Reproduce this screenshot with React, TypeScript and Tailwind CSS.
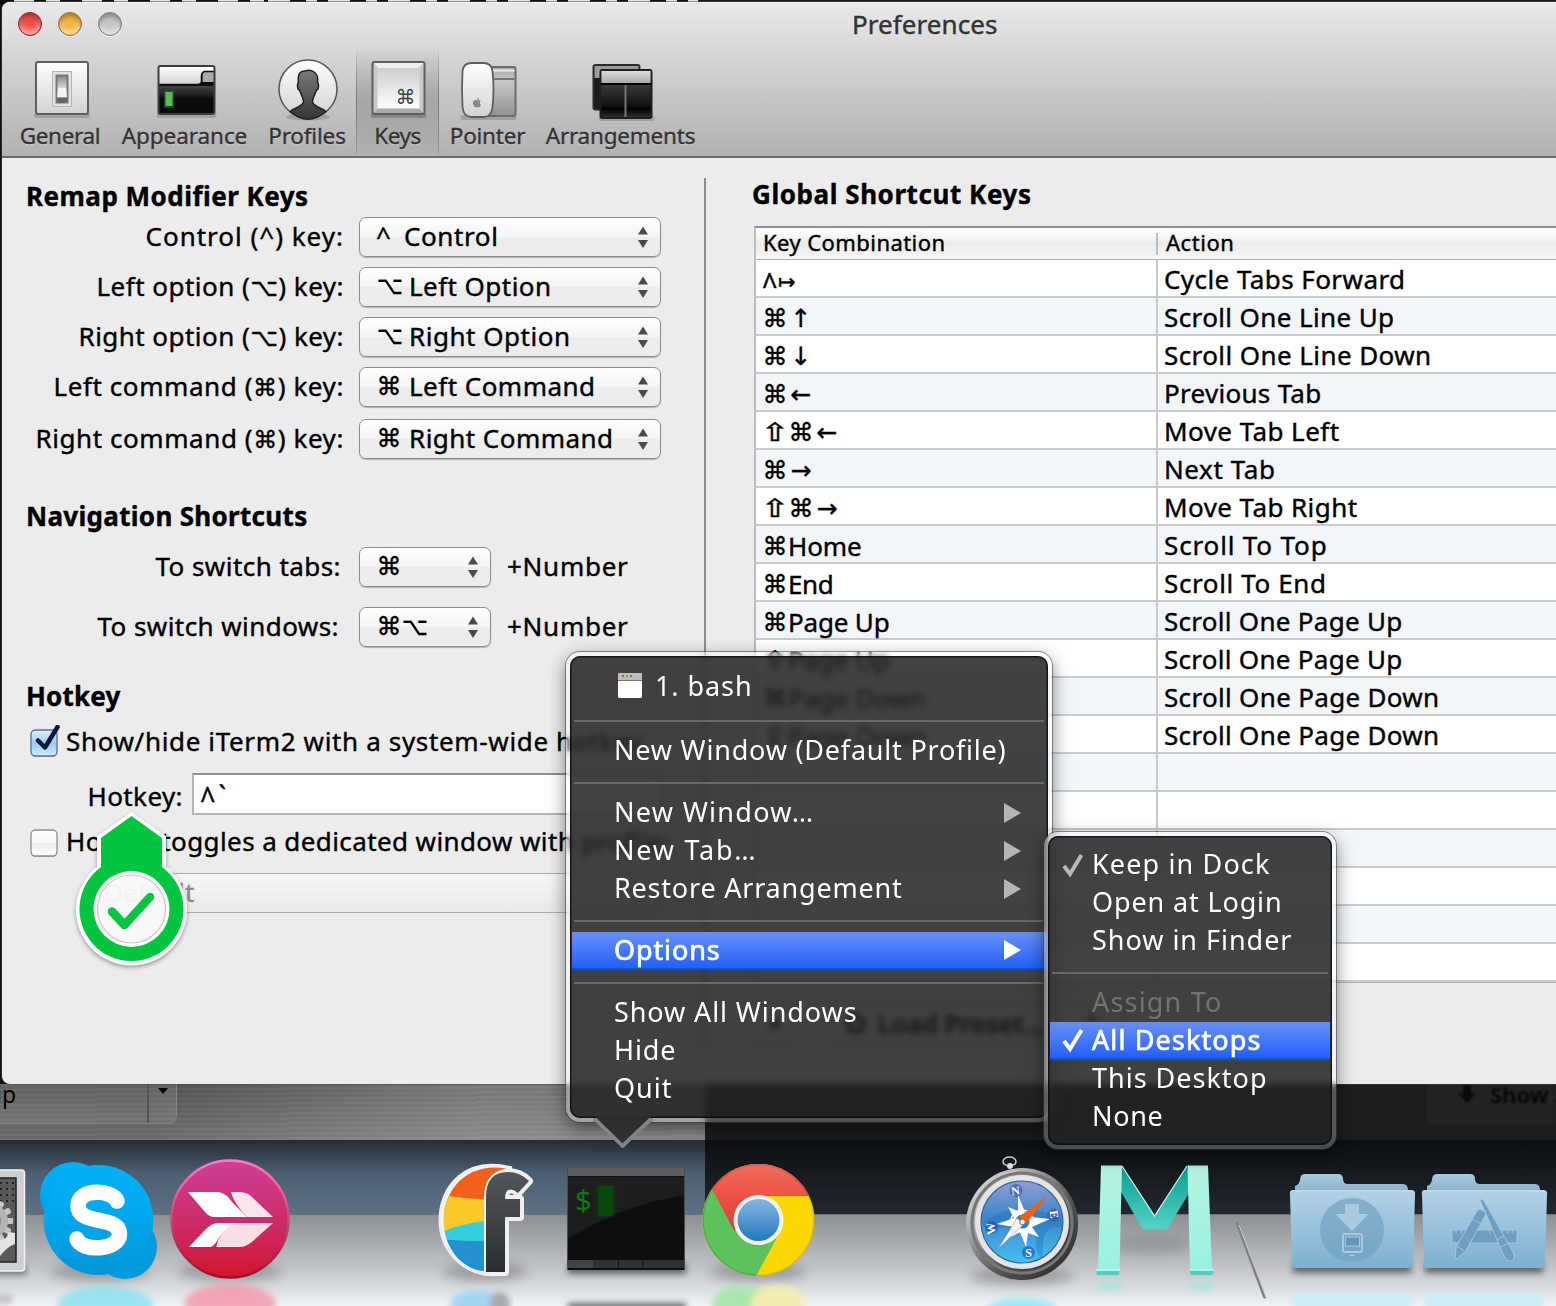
import { useLayoutEffect, useRef, type ReactNode } from "react";
import { FaApple } from "react-icons/fa";

/* Text run tracked so that it fills a given width. */
function Fit({ w, className = "", children }: { w: number; className?: string; children: ReactNode }) {
  const ref = useRef<HTMLSpanElement>(null);
  useLayoutEffect(() => {
    const el = ref.current;
    if (!el) return;
    el.style.letterSpacing = "0px";
    const natural = el.getBoundingClientRect().width;
    const n = Array.from(el.textContent || "").length;
    el.style.letterSpacing = `${(w - 1.5 - natural) / Math.max(n, 1)}px`;
  }, [w]);
  return (
    <span ref={ref} className={`inline-block whitespace-pre ${className}`}>
      {children}
    </span>
  );
}

const Sym = ({ children }: { children: string }) => (
  <span className="font-['DejaVu_Sans'] text-[24px] leading-none">{children}</span>
);

const Key = ({ children, className = "" }: { children: string; className?: string }) => (
  <span className={`inline-flex w-[26px] shrink-0 justify-center font-['DejaVu_Sans'] text-[25px] leading-none tracking-normal ${className} ${children === "⇧" ? "scale-x-140" : ""}`}>{children}</span>
);

/* ---------- toolbar ---------- */

function ToolIcon({ cx, children }: { cx: number; children: ReactNode }) {
  return (
    <svg width="72" height="68" viewBox={`${cx - 36} 55 72 68`} className="block shrink-0">
      {children}
    </svg>
  );
}

function Tool({ w, label, lw, active, children }: { w: string; label: string; lw: number; active?: boolean; children: ReactNode }) {
  return (
    <div className={`relative flex h-[107px] shrink-0 flex-col items-center pt-[8px] ${w}`}>
      {active && (
        <div className="absolute inset-0 flex justify-between bg-linear-to-b from-transparent via-[#9f9f9f]/80 to-[#b0b0b0]">
          <span className="w-px bg-linear-to-b from-transparent via-[#777] to-[#999]" />
          <span className="w-px bg-linear-to-b from-transparent via-[#777] to-[#999]" />
        </div>
      )}
      <div className="relative">{children}</div>
      <Fit w={lw} className="relative mt-[-2px] text-[22.5px] leading-[30px] text-[#333] [text-shadow:0_1px_1px_rgba(255,255,255,.5)]">{label}</Fit>
    </div>
  );
}

function Toolbar() {
  return (
    <div className="flex pl-[7px]">
      <Tool w="w-[102px]" label="General" lw={82}>
        <ToolIcon cx={60}>
          <rect x="34" y="113" width="56" height="5" rx="2.5" fill="#000" opacity=".15" />
          <rect x="36" y="62" width="52" height="52" rx="2" fill="url(#panel)" stroke="#5e5e5e" strokeWidth="2" />
          <rect x="52.500" y="71.500" width="19" height="35" fill="#e2e2e2" stroke="#b5b5b5" />
          <rect x="56.500" y="75.500" width="11" height="27" fill="url(#switch)" stroke="#777" strokeWidth="2" />
          <path d="M58 88h8l1 9h-10z" fill="#f4f4f4" />
          <path d="M57 98h10l-1 5h-8z" fill="#666" />
        </ToolIcon>
      </Tool>
      <Tool w="w-[147px]" label="Appearance" lw={127}>
        <ToolIcon cx={184.5}>
          <rect x="156" y="113" width="60" height="5" rx="2.500" fill="#000" opacity=".15" />
          <rect x="158" y="66" width="56" height="48" rx="2" fill="#0b0b0b" />
          <rect x="158" y="86" width="56" height="12" fill="url(#glass)" />
          <path d="M158 67h56v5h-9q-4 0-4 4v5q0 3-4 3h-39z" fill="url(#panel)" />
          <rect x="202" y="72" width="12" height="10" fill="#aaa" />
          <path d="M158 84.500h39q4 0 4-3v-5q0-5 4-5h9M203 83h11" fill="none" stroke="#111" strokeWidth="1.600" />
          <rect x="158" y="66" width="56" height="48" rx="2" fill="none" stroke="#3d3d3d" strokeWidth="2" />
          <rect x="163.500" y="91" width="10" height="17" fill="#2f7d33" opacity=".5" />
          <rect x="165" y="92" width="7" height="14" fill="#55bd59" />
        </ToolIcon>
      </Tool>
      <Tool w="w-[98px]" label="Profiles" lw={79}>
        <ToolIcon cx={307}>
          <ellipse cx="308" cy="117" rx="22" ry="3.500" fill="#000" opacity=".15" />
          <circle cx="308" cy="89" r="29" fill="url(#panel)" stroke="#5a5a5a" strokeWidth="1.600" />
          <path d="M290 111.500C294 108 302 107 303.500 102C304 99 301 95 299.500 90C297 90 297 84 298.500 82C297 74 301 70.500 305 71C311 69 319 72 317.500 82C319 84 319 90 316.500 90C315 95 312 99 312.500 102C314 107 322 108 326 111.500Q308 127 290 111.500z" fill="url(#person)" stroke="#222" strokeWidth="1.500" />
        </ToolIcon>
      </Tool>
      <Tool w="w-[83px]" label="Keys" lw={48} active>
        <ToolIcon cx={397.5}>
          <rect x="370" y="113" width="56" height="5" rx="2.500" fill="#000" opacity=".2" />
          <rect x="372" y="62" width="52" height="52" rx="2" fill="#c9c9c9" stroke="#5e5e5e" strokeWidth="2" />
          <path d="M373 63h50l-5 5h-40z" fill="#efefef" />
          <path d="M373 113h50l-5-5h-40z" fill="#a9a9a9" />
          <rect x="377" y="68" width="42" height="40.500" fill="url(#key)" />
          <text x="395" y="104" fontSize="20" fill="#444" fontFamily="DejaVu Sans">⌘</text>
        </ToolIcon>
      </Tool>
      <Tool w="w-[97px]" label="Pointer" lw={77}>
        <ToolIcon cx={487.5}>
          <rect x="460" y="115" width="56" height="5" rx="2.500" fill="#000" opacity=".15" />
          <rect x="485" y="67" width="30" height="49" rx="2" fill="url(#greywin)" stroke="#6b6b6b" strokeWidth="2" />
          <path d="M486 70.500h28" stroke="#eee" strokeWidth="2" />
          <path d="M486 79h28" stroke="#777" strokeWidth="2" />
          <path d="M471 63h12q8 0 9 8q2 19 0 36q-1 10-9 10h-12q-8 0-9-10q-1-18 0-36q1-8 9-8z" fill="url(#panel)" stroke="#5e5e5e" strokeWidth="1.800" />
          <g color="#888">
            <FaApple x={471} y={97} size={11} />
          </g>
        </ToolIcon>
      </Tool>
      <Tool w="w-[169px]" label="Arrangements" lw={151}>
        <ToolIcon cx={620.5}>
          <rect x="598" y="116" width="56" height="5" rx="2.500" fill="#000" opacity=".15" />
          <rect x="593" y="65" width="46" height="44.500" rx="2" fill="#1c1c1c" stroke="#2a2a2a" strokeWidth="2" />
          <rect x="594" y="66" width="44" height="12" fill="#9a9a9a" />
          <rect x="600" y="70" width="51" height="48" rx="2" fill="url(#dark)" stroke="#1f1f1f" strokeWidth="2" />
          <rect x="601" y="71" width="49" height="12" fill="url(#silver)" />
          <path d="M600 84h51" stroke="#000" strokeWidth="2" />
          <path d="M625 85v32" stroke="#777" strokeWidth="2" />
        </ToolIcon>
      </Tool>
      <svg width="0" height="0">
        <defs>
          <linearGradient id="panel" x2="0" y2="1"><stop stopColor="#fff" /><stop offset="1" stopColor="#d2d2d2" /></linearGradient>
          <linearGradient id="switch" x2="0" y2="1"><stop stopColor="#888" /><stop offset=".5" stopColor="#ddd" /><stop offset="1" stopColor="#777" /></linearGradient>
          <linearGradient id="glass" x2="0" y2="1"><stop stopColor="#444" /><stop offset="1" stopColor="#111" /></linearGradient>
          <linearGradient id="person" x2="0" y2="1"><stop stopColor="#7a7a7a" /><stop offset="1" stopColor="#353535" /></linearGradient>
          <linearGradient id="key" x2="0" y2="1"><stop stopColor="#cfcfcf" /><stop offset="1" stopColor="#fdfdfd" /></linearGradient>
          <linearGradient id="greywin" x2="0" y2="1"><stop stopColor="#aaa" /><stop offset=".3" stopColor="#c8c8c8" /><stop offset="1" stopColor="#919191" /></linearGradient>
          <linearGradient id="dark" x2="0" y2="1"><stop stopColor="#555" /><stop offset=".75" stopColor="#111" /><stop offset=".8" stopColor="#000" /><stop offset="1" stopColor="#333" /></linearGradient>
          <linearGradient id="silver" x2="0" y2="1"><stop stopColor="#ddd" /><stop offset="1" stopColor="#aaa" /></linearGradient>
        </defs>
      </svg>
    </div>
  );
}

/* ---------- left pane ---------- */

function Popup({ w, children, disabled }: { w: string; children?: ReactNode; disabled?: boolean }) {
  return (
    <div
      className={`flex h-10 shrink-0 items-center justify-between rounded-[7px] border pr-[11px] pl-[15px] ${w} ${
        disabled
          ? "border-[#adadad] bg-linear-to-b from-[#f6f6f6] to-[#e9e9e9] text-[#8a8a8a]"
          : "border-[#8e8e8e] bg-linear-to-b from-white from-0% via-[#f4f4f4] via-49% to-[#ececec] to-52% shadow-[0_1px_1px_rgba(0,0,0,.25)]"
      }`}
    >
      <span className="flex items-center pb-[3px]">{children}</span>
      {!disabled && (
        <svg width="12" height="24" viewBox="0 0 12 24">
          <path d="M6 1.500l5 8H1zM6 23l5-8H1z" fill="#4a4a4a" />
        </svg>
      )}
    </div>
  );
}

function Row({ mt, label, lw, right = "w-[318px]", children }: { mt: string; label: ReactNode; lw: number; right?: string; children: ReactNode }) {
  return (
    <div className={`flex h-10 items-center ${mt}`}>
      <div className="flex w-[333px] shrink-0">
        <div className={`flex justify-end pb-[3px] ${right}`}>
          <Fit w={lw}>{label}</Fit>
        </div>
      </div>
      {children}
    </div>
  );
}

const Heading = ({ w, children, className = "" }: { w: number; children: string; className?: string }) => (
  <div className={`h-[40px] leading-[38px] font-bold ${className}`}>
    <Fit w={w}>{children}</Fit>
  </div>
);

function Checkbox({ on }: { on?: boolean }) {
  return (
    <svg width="34" height="34" viewBox="28 725 34 34" className="shrink-0">
      <defs>
        <linearGradient id="ckb" x2="0" y2="1"><stop stopColor="#e6f1fd" /><stop offset=".5" stopColor="#9ccbf5" /><stop offset="1" stopColor="#cdeeff" /></linearGradient>
        <linearGradient id="ckw" x2="0" y2="1"><stop stopColor="#fff" /><stop offset=".5" stopColor="#f6f6f6" /><stop offset=".52" stopColor="#ededed" /><stop offset="1" stopColor="#fafafa" /></linearGradient>
      </defs>
      <rect x="31" y="731" width="26" height="26" rx="4.500" fill="#000" opacity=".18" />
      <rect x="31" y="730" width="26" height="26" rx="4.500" fill={on ? "url(#ckb)" : "url(#ckw)"} stroke={on ? "#5f6f92" : "#8e8e8e"} strokeWidth="1.300" />
      {on && <path d="M38 740.500L45 747.500L57.500 727" fill="none" stroke="#051a38" strokeWidth="4.500" strokeLinecap="round" strokeLinejoin="round" />}
    </svg>
  );
}

function LeftPane() {
  return (
    <div className="w-[702px] shrink-0 pt-[20px] pl-6">
      <Heading w={284} className="h-[39px]! leading-[37px]!">Remap Modifier Keys</Heading>
      <Row mt="mt-0" lw={200} label="Control (^) key:">
        <Popup w="w-[302px]"><span className="w-[29px] pl-px">^</span><Fit w={96}>Control</Fit></Popup>
      </Row>
      <Row mt="mt-[10px]" lw={249} label={<>Left option (<Sym>⌥</Sym>) key:</>}>
        <Popup w="w-[302px]"><Key className="ml-[2px] scale-x-90">⌥</Key><span className="pl-[6px]"><Fit w={144}>Left Option</Fit></span></Popup>
      </Row>
      <Row mt="mt-[10px]" lw={267} label={<>Right option (<Sym>⌥</Sym>) key:</>}>
        <Popup w="w-[302px]"><Key className="ml-[2px] scale-x-90">⌥</Key><span className="pl-[6px]"><Fit w={163}>Right Option</Fit></span></Popup>
      </Row>
      <Row mt="mt-[10px]" lw={292} label={<>Left command (<Sym>⌘</Sym>) key:</>}>
        <Popup w="w-[302px]"><Key className="ml-[1px] pt-px">⌘</Key><span className="pl-[7px]"><Fit w={188}>Left Command</Fit></span></Popup>
      </Row>
      <Row mt="mt-[12px]" lw={310} label={<>Right command (<Sym>⌘</Sym>) key:</>}>
        <Popup w="w-[302px]"><Key className="ml-[1px] pt-px">⌘</Key><span className="pl-[7px]"><Fit w={206}>Right Command</Fit></span></Popup>
      </Row>

      <Heading w={283} className="mt-[38px]">Navigation Shortcuts</Heading>
      <Row mt="mt-[10px]" lw={187} right="w-[315px]" label="To switch tabs:">
        <Popup w="w-[132px]"><Key className="ml-[1px] pt-[2px]">⌘</Key></Popup>
        <Fit w={123} className="ml-4 pb-[3px]">+Number</Fit>
      </Row>
      <Row mt="mt-5" lw={243} right="w-[313px]" label="To switch windows:">
        <Popup w="w-[132px]"><Key className="ml-[1px] pt-[2px]">⌘</Key><Key className="scale-x-90 pt-[2px]">⌥</Key></Popup>
        <Fit w={123} className="ml-4 pb-[3px]">+Number</Fit>
      </Row>

      <Heading w={96} className="mt-[30px]">Hotkey</Heading>
      <div className="mt-[8px] flex h-[34px] items-center pl-[2px]">
        <Checkbox on />
        <Fit w={578} className="ml-[4px] pb-[2px]">Show/hide iTerm2 with a system-wide hotkey</Fit>
      </div>
      <div className="mt-[14px] flex h-[42px] items-center">
        <div className="flex w-[157px] justify-end"><Fit w={97} className="pt-[3px]">Hotkey:</Fit></div>
        <div className="ml-[9px] flex h-[42px] w-[470px] items-center border-2 border-[#b5b5b5] border-t-[#909090] bg-white pl-[6px]">
          <span className="flex gap-[3px] text-[27px]"><span className="translate-y-[5px] scale-y-120">^</span><span className="translate-y-[2px]">`</span></span>
        </div>
      </div>
      <div className="mt-[10px] flex h-[34px] items-center pl-[2px]">
        <Checkbox />
        <Fit w={606} className="ml-[4px] pb-[2px]">Hotkey toggles a dedicated window with profile:</Fit>
      </div>
      <div className="mt-[14px] pl-[62px]">
        <Popup w="w-[574px]" disabled><Fit w={92}>Default</Fit></Popup>
      </div>
    </div>
  );
}

/* ---------- shortcut table ---------- */

const rows: [string[], string, number, string, number][] = [
  [[], "", 0, "Cycle Tabs Forward", 243],
  [["⌘", "↑"], "", 0, "Scroll One Line Up", 232],
  [["⌘", "↓"], "", 0, "Scroll One Line Down", 269],
  [["⌘", "←"], "", 0, "Previous Tab", 159],
  [["⇧", "⌘", "←"], "", 0, "Move Tab Left", 177],
  [["⌘", "→"], "", 0, "Next Tab", 113],
  [["⇧", "⌘", "→"], "", 0, "Move Tab Right", 195],
  [["⌘"], "Home", 75, "Scroll To Top", 165],
  [["⌘"], "End", 47, "Scroll To End", 164],
  [["⌘"], "Page Up", 103, "Scroll One Page Up", 240],
  [["⇧"], "Page Up", 103, "Scroll One Page Up", 240],
  [["⌘"], "Page Down", 140, "Scroll One Page Down", 277],
  [["⇧"], "Page Down", 140, "Scroll One Page Down", 277],
  ...Array.from({ length: 6 }, (): [string[], string, number, string, number] => [[], "", 0, "", 0]),
];

function RightPane() {
  return (
    <div className="min-w-0 flex-1 pt-[17px] pl-[46px]">
      <Heading w={281}>Global Shortcut Keys</Heading>
      <div className="mt-[11px] ml-[2px] border-t-2 border-l-2 border-t-[#8f8f8f] border-l-[#bdbdbd]">
        <div className="flex h-[32px] items-center border-b border-b-[#b0b0b0] bg-linear-to-b from-white from-10% via-[#ebebeb] via-50% to-[#f7f7f7] text-[22px]">
          <div className="flex h-[22px] w-[402px] items-center border-r-2 border-r-[#bdbdbd] pb-[4px] pl-[7px]"><Fit w={184}>Key Combination</Fit></div>
          <div className="flex items-center pb-[4px] pl-[8px]"><Fit w={70}>Action</Fit></div>
        </div>
        {rows.map(([keys, name, nw, action, aw], i) => (
          <div key={i} className={`flex h-[38px] border-b-2 border-b-[#cbcbcb] ${i % 2 ? "bg-[#f2f6fb]" : "bg-white"}`}>
            <div className="flex w-[402px] shrink-0 items-center border-r-2 border-r-[#cbcbcb] pt-[3px] pl-[6px]">
              {i === 0 && (
                <span className="flex items-center">
                  <span className="w-[16px] translate-y-[5px] scale-y-120 text-[27px] leading-none">^</span>
                  <span className="pt-[6px] font-['DejaVu_Sans'] text-[21px] leading-none">↦</span>
                </span>
              )}
              {keys.map((k) => <Key key={k} className="translate-y-px">{k}</Key>)}
              {name && <Fit w={nw}>{name}</Fit>}
            </div>
            <div className="flex items-center pt-[2px] pl-[6px]">{action && <Fit w={aw}>{action}</Fit>}</div>
          </div>
        ))}
        <div className="h-px bg-[#b5b5b5]" />
      </div>
      <div className="mt-[22px] ml-[2px] flex h-[38px] items-center gap-[38px] text-[26px]">
        <span className="flex h-full w-[42px] items-center justify-center border border-[#aaa] bg-[#f4f4f4] font-bold">+</span>
        <span className="flex h-full w-[290px] items-center border border-[#aaa] bg-[#f4f4f4] pl-2 font-bold">
          <span className="w-[34px] font-['DejaVu_Sans'] text-[30px]">✿</span>
          <Fit w={170}>Load Preset…</Fit>
          <svg width="12" height="24" viewBox="0 0 12 24" className="ml-[40px]"><path d="M6 1l5 8H1zM6 23l5-8H1z" fill="#222" /></svg>
        </span>
      </div>
    </div>
  );
}

/* ---------- menus ---------- */

const Sep = ({ mt = "mt-3" }: { mt?: string }) => <div className={`mx-[4px] mb-[10px] h-[2px] bg-[#686868] ${mt}`} />;

function Item({ w, label, sub, hot, dim, check, pad = "pl-[42px]" }: { w: number; label: string; sub?: boolean; hot?: boolean; dim?: boolean; check?: string; pad?: string }) {
  return (
    <div
      className={`mx-[2px] flex h-[38px] items-center justify-between pr-[25px] ${pad} ${
        hot ? "border-b-2 border-b-[#0b4fee] bg-linear-to-b from-[#678ffa] to-[#225ff8]" : "pb-px"
      } ${dim ? "text-[#74746e]" : "text-white"}`}
    >
      <span className="flex items-center">
        {check && (
          <svg width="31" height="26" viewBox="0 0 31 26" className="-ml-[31px]">
            <path d="M3 14l6 8L20.500 3" fill="none" stroke={check} strokeWidth="4" />
          </svg>
        )}
        <Fit w={w} className={hot ? "pb-px [-webkit-text-stroke:0.7px_white]" : "pb-[2px]"}>{label}</Fit>
      </span>
      {sub && (
        <svg width="18" height="20" viewBox="0 0 18 20">
          <path d="M1 0L18 10L1 20z" fill={hot ? "#fff" : "#b5b5b5"} />
        </svg>
      )}
    </div>
  );
}

const shell =
  "absolute rounded-[14px] border-4 border-white/25 bg-[rgb(35,35,35)]/86 bg-clip-padding shadow-[0_0_0_1px_rgba(60,60,60,.55),0_6px_18px_rgba(0,0,0,.5)] backdrop-blur-[3px] text-[27px] [-webkit-text-stroke:0px]";

function DockMenu() {
  return (
    <div className={`${shell} top-[652px] left-[566px] h-[470px] w-[486px]`}>
      <div className="h-full rounded-[10px] pt-3 shadow-[inset_0_0_0_1.5px_rgba(10,10,10,.75)]">
        <div className="flex h-10 items-center pb-[4px] pl-[48px] text-white">
          <svg width="24" height="26" viewBox="0 0 24 26" className="mr-[13px] mb-[1px]">
            <rect width="24" height="25" rx="1.500" fill="#fff" />
            <rect width="24" height="7" rx="1.500" fill="#bdbdbd" />
            <path d="M0 7.500h24" stroke="#777" />
            <path d="M4 3h2" stroke="#e33" strokeWidth="2" /><path d="M8 3h2" stroke="#c80" strokeWidth="2" /><path d="M12 3h2" stroke="#393" strokeWidth="2" />
          </svg>
          <Fit w={99}>1. bash</Fit>
        </div>
        <Sep />
        <Item w={394} label="New Window (Default Profile)" />
        <Sep />
        <Item w={202} label="New Window…" sub />
        <Item w={145} label="New Tab…" sub />
        <Item w={290} label="Restore Arrangement" sub />
        <Sep />
        <Item w={108} label="Options" sub hot />
        <Sep />
        <Item w={245} label="Show All Windows" />
        <Item w={64} label="Hide" />
        <Item w={60} label="Quit" />
      </div>
      <svg width="62" height="34" viewBox="592 1116 62 34" className="absolute top-[460px] left-[22px]">
        <defs>
          <linearGradient id="tip" x2="0" y2="1"><stop stopColor="#2c2c2c" /><stop offset="1" stopColor="#343434" /></linearGradient>
        </defs>
        <path d="M596 1116H650L650 1120L622.500 1147L596 1120z" fill="url(#tip)" />
        <path d="M593 1120h3L622.500 1146L650 1120h3" fill="none" stroke="#858585" strokeWidth="3.800" strokeLinejoin="round" />
      </svg>
    </div>
  );
}

function SubMenu() {
  return (
    <div className={`${shell} top-[832px] left-[1044px] h-[317px] w-[292px]`}>
      <div className="h-full rounded-[10px] pt-[10px] shadow-[inset_0_0_0_1.5px_rgba(10,10,10,.75)]">
        <Item w={180} label="Keep in Dock" check="#b9b9b9" />
        <Item w={192} label="Open at Login" />
        <Item w={202} label="Show in Finder" />
        <Sep />
        <Item w={132} label="Assign To" dim />
        <Item w={171} label="All Desktops" hot check="#fff" />
        <Item w={177} label="This Desktop" />
        <Item w={73} label="None" />
      </div>
    </div>
  );
}

/* ---------- dock ---------- */

function Slot({ x, w, children }: { x: number; w: number; children?: ReactNode }) {
  return (
    <svg width={w} height="156" viewBox={`${x} 1150 ${w} 156`} className="block shrink-0">
      {children}
    </svg>
  );
}

const Shadow = ({ cx, rx, cy = 1272 }: { cx: number; rx: number; cy?: number }) => (
  <ellipse cx={cx} cy={cy} rx={rx} ry="9" fill="#000" opacity=".24" filter="url(#soft)" />
);

function Folder({ x }: { x: number }) {
  return (
    <>
      <rect x={x + 4} y="1262" width="118" height="11" fill="#222" opacity=".6" filter="url(#soft2)" />
      <rect x={x + 4} y="1293" width="118" height="20" fill="#cdeef8" filter="url(#soft2)" />
      <path d={`M${x + 6} 1196v-10q4-1 5-6q0-6 5-6h33q5 0 5 5q0 5 5 5h55q5 0 5 6v8z`} fill="url(#fback)" />
      <path d={`M${x + 4} 1190h118q5 0 4 5l-2 70q0 3-3 3h-115q-3 0-3-3l-2-70q-1-5 3-5z`} fill="url(#ffront)" />
      <path d={`M${x + 3} 1191h120`} stroke="#c9dfee" strokeWidth="1.200" />
    </>
  );
}

function Dock() {
  const teeth = Array.from({ length: 12 }, (_, i) => i * 30);
  const f = "M486 1272V1197Q486 1172 508 1172Q520 1172 529 1181L518 1193Q513 1188 508.500 1190Q505 1191 505 1199H520V1217H505V1272z";
  return (
    <div className="absolute top-[1150px] left-0 flex w-[1556px]">
      <Slot x={0} w={30}>
        <defs>
          <filter id="soft" x="-30%" y="-100%" width="160%" height="300%"><feGaussianBlur stdDeviation="6" /></filter>
          <filter id="soft2" x="-20%" y="-100%" width="140%" height="300%"><feGaussianBlur stdDeviation="3" /></filter>
          <linearGradient id="sky" x2="0" y2="1"><stop stopColor="#00b0f6" /><stop offset=".4" stopColor="#00aaf0" /><stop offset="1" stopColor="#0096d6" /></linearGradient>
          <linearGradient id="skitch" x2="0" y2="1"><stop stopColor="#cf3f97" /><stop offset=".55" stopColor="#cc2a68" /><stop offset="1" stopColor="#d3152c" /></linearGradient>
          <linearGradient id="rim" x2="0" y2="1"><stop stopColor="#ff7cc0" /><stop offset="1" stopColor="#a01028" /></linearGradient>
          <linearGradient id="fgrey" x2="0" y2="1"><stop stopColor="#50575a" /><stop offset="1" stopColor="#2b2d30" /></linearGradient>
          <linearGradient id="ffront" x2="0" y2="1"><stop stopColor="#b4d2e6" /><stop offset="1" stopColor="#7db0d2" /></linearGradient>
          <linearGradient id="fback" x2="0" y2="1"><stop stopColor="#a8cbe0" /><stop offset="1" stopColor="#7fa9c6" /></linearGradient>
          <linearGradient id="chrome" x1="0" y1="0" x2="1" y2="1"><stop stopColor="#f5f5f5" /><stop offset=".35" stopColor="#999" /><stop offset=".6" stopColor="#555" /><stop offset="1" stopColor="#222" /></linearGradient>
          <linearGradient id="dial" x2="0" y2="1"><stop stopColor="#8c9fd4" /><stop offset=".45" stopColor="#3d86cc" /><stop offset="1" stopColor="#45c0f0" /></linearGradient>
          <linearGradient id="cblue" x2="0" y2="1"><stop stopColor="#86b6e4" /><stop offset="1" stopColor="#2079bd" /></linearGradient>
          <linearGradient id="cred" x2="0" y2="1"><stop stopColor="#f2705f" /><stop offset="1" stopColor="#e6352d" /></linearGradient>
          <linearGradient id="mside" x2="0" y2="1"><stop stopColor="#b5f2e2" /><stop offset="1" stopColor="#98f3e0" /></linearGradient>
          <linearGradient id="mmid" x2="0" y2="1"><stop stopColor="#079a92" /><stop offset="1" stopColor="#55d4c6" /></linearGradient>
        </defs>
        <rect x="-80" y="1265" width="106" height="10" fill="#000" opacity=".4" filter="url(#soft2)" />
        <rect x="-80" y="1170" width="104.500" height="101" rx="3" fill="#cfcfcf" stroke="#f2f2f2" strokeWidth="1.500" />
        <rect x="-80" y="1178" width="96" height="84" fill="#5a5a5a" stroke="#222" strokeWidth="1.500" />
        {[1183, 1189, 1195, 1201].map((y) => <path key={y} d={`M0 ${y}h15`} stroke="#222" strokeWidth="2" strokeDasharray="2 4" />)}
        <g transform="translate(-9 1221)">
          {teeth.map((a) => <rect key={a} x="-3" y="-22" width="6" height="44" rx="1.500" fill="#c4c4c4" transform={`rotate(${a})`} />)}
          <circle r="17" fill="#b4b4b4" />
          <circle r="10" fill="#888" />
        </g>
        <path d="M0 1240L6 1238L9 1232L15 1233V1244Q8 1246 0 1256z" fill="#e4e4e4" />
        <rect x="-10" y="1295" width="22" height="8" fill="#bbb" filter="url(#soft2)" />
      </Slot>
      <Slot x={30} w={135}>
        <Shadow cx={100} rx={50} />
        <ellipse cx="105" cy="1306" rx="48" ry="20" fill="#7fe0f0" opacity=".75" filter="url(#soft2)" />
        <circle cx="73" cy="1195" r="33" fill="url(#sky)" />
        <circle cx="125" cy="1247" r="32" fill="#009add" />
        <circle cx="98.500" cy="1220" r="55" fill="url(#sky)" />
        <path d="M117 1201C112 1189 78 1188 78 1206C78 1226 119.500 1215 119.500 1234C119.500 1251 81 1252 77 1239" fill="none" stroke="#fff" strokeWidth="15.500" strokeLinecap="round" />
      </Slot>
      <Slot x={165} w={135}>
        <Shadow cx={230} rx={52} />
        <ellipse cx="230" cy="1304" rx="46" ry="20" fill="#f78fa5" opacity=".75" filter="url(#soft2)" />
        <circle cx="230" cy="1219" r="58.500" fill="url(#skitch)" stroke="url(#rim)" strokeWidth="2.500" />
        <path d="M188 1192h31q8 2 13 10l15 15h-33q-5 0-9-5z" fill="#fff" />
        <path d="M231 1192h9q8 0 14 7l19 18h-26q-13-13-16-25z" fill="#fbe4ee" />
        <path d="M189 1247l17-18q6-6 12-6h18q-11 6-17 15q-4 7-8 9z" fill="#fff" />
        <path d="M216 1247q4-16 18-24h39l-20 18q-7 6-13 6z" fill="#f8e0e6" />
      </Slot>
      <Slot x={300} w={130} />
      <Slot x={430} w={130}>
        <Shadow cx={485} rx={42} />
        <ellipse cx="478" cy="1304" rx="28" ry="14" fill="#a5d5f5" filter="url(#soft2)" />
        <ellipse cx="500" cy="1304" rx="10" ry="12" fill="#aaa" filter="url(#soft2)" />
        <path d="M512 1168C465 1156 440 1187 440 1220C440 1250 463 1275 495 1275" fill="#f4f4f4" stroke="#eee" strokeWidth="3" />
        <path d={f} fill="#f4f4f4" stroke="#efefef" strokeWidth="8" strokeLinejoin="round" />
        <clipPath id="disc"><path d="M506 1168.500C465 1162 443.500 1192 443.500 1220C443.500 1248 463 1270 484 1271V1197Q484 1173 506 1168.500z" /></clipPath>
        <g clipPath="url(#disc)">
          <rect x="440" y="1160" width="70" height="50" fill="#f2601b" />
          <path d="M440 1194q20 5 60 6v40h-60z" fill="#fdc928" />
          <path d="M440 1233q25-12 60-13v60h-60z" fill="#33cfe0" />
          <path d="M440 1239q25 3 60 2v40h-60z" fill="#2590d0" />
        </g>
        <path d={f} fill="url(#fgrey)" />
      </Slot>
      <Slot x={560} w={135}>
        <rect x="568" y="1264" width="118" height="10" fill="#000" opacity=".5" filter="url(#soft2)" />
        <rect x="568" y="1303" width="118" height="8" fill="#666" filter="url(#soft2)" />
        <rect x="567" y="1168" width="118" height="102" rx="1.500" fill="#0e0e0e" />
        <rect x="568" y="1168" width="116" height="8" fill="#5d5d5d" />
        <path d="M568 1177v62Q620 1206 684 1195v-18z" fill="#1d1d1d" />
        <rect x="568" y="1260" width="116" height="8" fill="#303030" />
        <rect x="568" y="1260" width="25" height="8" fill="#444" />
        <path d="M618.500 1260v8M643 1260v8" stroke="#111" />
        <path d="M567.500 1168v102M684.500 1168v102" stroke="#4a4a4a" />
        <text x="575" y="1211" fontSize="29" fill="#087a10" fontFamily="Noto Sans" stroke="none">$</text>
        <rect x="597" y="1185" width="17" height="32" fill="#0a5c12" opacity=".4" filter="url(#soft2)" />
        <rect x="598.500" y="1186" width="14.500" height="30" fill="#07490d" />
      </Slot>
      <Slot x={695} w={135}>
        <Shadow cx={758} rx={48} />
        <ellipse cx="742" cy="1304" rx="30" ry="18" fill="#a8e6ac" filter="url(#soft2)" />
        <ellipse cx="778" cy="1304" rx="28" ry="18" fill="#f3eeb0" filter="url(#soft2)" />
        <clipPath id="cr"><circle cx="758.500" cy="1220" r="56" /></clipPath>
        <g clipPath="url(#cr)">
          <rect x="700" y="1160" width="120" height="120" fill="#fdd703" />
          <path d="M700 1160H820V1196H758L734 1234L700 1190z" fill="url(#cred)" />
          <path d="M712 1189L735 1228Q745 1245 758 1245Q775 1244 780 1232L754 1280H690V1160z" fill="#5dc25c" />
          <path d="M712 1189L735 1232Q734 1196 758 1196H830V1160H700z" fill="url(#cred)" />
          <circle cx="758.500" cy="1220" r="55.500" fill="none" stroke="#000" opacity=".12" strokeWidth="2" />
        </g>
        <circle cx="758.500" cy="1220" r="25" fill="#f2f2f2" />
        <circle cx="758.500" cy="1220" r="21" fill="url(#cblue)" />
      </Slot>
      <Slot x={830} w={125} />
      <Slot x={955} w={135}>
        <Shadow cx={1022} rx={52} cy={1276} />
        <ellipse cx="1022" cy="1308" rx="34" ry="10" fill="#9deaf6" filter="url(#soft2)" />
        <ellipse cx="1009.500" cy="1161.500" rx="6.500" ry="4.500" fill="none" stroke="#c9c9c9" strokeWidth="1.500" />
        <circle cx="1010" cy="1166" r="3" fill="#ddd" />
        <circle cx="1022" cy="1224" r="56" fill="url(#chrome)" />
        <circle cx="1022" cy="1223" r="50" fill="none" stroke="#777" strokeWidth="3" />
        <circle cx="1022" cy="1222" r="47" fill="#e4e4e4" />
        <circle cx="1022" cy="1222" r="41" fill="url(#dial)" stroke="#35658f" strokeWidth="1.200" />
        <path d="M983 1222q18-14 39-13q22 1 40 11v8q-12-4-18 8l-2 22q-8-4-6-22q-6-10-18-8q-20 0-35-2z" fill="#1b6db5" opacity=".35" />
        <circle cx="1016" cy="1190.500" r="6.500" fill="#3650a8" opacity=".6" /><circle cx="1053.500" cy="1215" r="6.500" fill="#3650a8" opacity=".6" />
        <circle cx="991.500" cy="1227.500" r="6.500" fill="#2450b8" opacity=".7" /><circle cx="1028.500" cy="1252.500" r="6.500" fill="#1860d0" opacity=".7" />
        <circle cx="1022" cy="1221" r="11" fill="none" stroke="#fff" strokeWidth="1.500" />
        <path d="M1018 1195l7 17l9-4l-3 9l19 2l-18 8l7 10l-11-4l-2 14l-6-15l-9 5l3-10l-17-3l17-6l-6-11l10 4z" fill="#fff" />
        <circle cx="1022.500" cy="1221.500" r="7" fill="#2b78c2" />
        <path d="M998 1249l19-31l7 6z" fill="#f5f2ee" stroke="#888" strokeWidth=".5" />
        <path d="M1048 1195l-29 22l7 7z" fill="#f2600d" />
        <circle cx="1022.500" cy="1222" r="2.800" fill="#eee" stroke="#777" />
        <g fill="#fff" stroke="none" fontFamily="Liberation Serif" fontWeight="bold" fontSize="12" textAnchor="middle">
          <text transform="translate(1016 1195) rotate(-8)">N</text>
          <text transform="translate(1050 1215) rotate(82)">E</text>
          <text transform="translate(1028.500 1257)">S</text>
          <text transform="translate(995 1228) rotate(-98)">W</text>
        </g>
      </Slot>
      <Slot x={1090} w={135}>
        <ellipse cx="1153" cy="1245" rx="40" ry="9" fill="#000" opacity=".12" filter="url(#soft)" />
        <rect x="1097" y="1283" width="24" height="6" fill="#9fe6dc" filter="url(#soft2)" />
        <rect x="1190" y="1283" width="24" height="6" fill="#9fe6dc" filter="url(#soft2)" />
        <path d="M1122 1166L1154.500 1216L1187 1166L1191 1190L1167 1229.500H1143L1120 1190z" fill="url(#mmid)" />
        <path d="M1122 1166L1154.500 1216L1187 1166" fill="none" stroke="#c4f5ea" strokeWidth="1.300" />
        <path d="M1101 1165.500H1122L1119.500 1270H1098z" fill="url(#mside)" />
        <path d="M1187.500 1165.500H1208L1212 1270H1190z" fill="url(#mside)" />
        <path d="M1096 1270h24l-1.500 5h-21.500zM1189.500 1270h24l-1 5h-22z" fill="#4fcfc0" />
        <path d="M1096 1270h24M1189.500 1270h24" stroke="#c4fff4" strokeWidth="1.500" />
      </Slot>
      <Slot x={1225} w={55}>
        <path d="M1237 1223L1264.500 1297" stroke="#808080" strokeWidth="3" strokeLinecap="round" />
        <path d="M1239 1225L1266 1297" stroke="#d0d0d0" />
      </Slot>
      <Slot x={1280} w={138}>
        <Folder x={1289} />
        <circle cx="1352" cy="1230" r="32" fill="#6f9fc0" opacity=".65" />
        <path d="M1345 1204h14v10h9.500L1352 1231l-16.500-17h9.500z" fill="#a7cae0" />
        <rect x="1343" y="1234" width="19" height="18" rx="2" fill="#7aa5c4" stroke="#a7cae0" strokeWidth="2" />
        <rect x="1345.500" y="1237" width="14" height="9" fill="#6496ba" stroke="#a7cae0" />
        <path d="M1348 1256q4-3 8 0z" fill="#a7cae0" />
      </Slot>
      <Slot x={1418} w={138}>
        <Folder x={1421} />
        <g fill="#6f9fc0" stroke="#a3c6de" strokeWidth="1">
          <rect x="1452" y="1230" width="65" height="13" />
          <path d="M1456 1230v4M1461 1230v4M1466 1230v4M1471 1230v4M1490 1230v4M1496 1230v4M1502 1230v4M1508 1230v4M1513 1230v4" />
          <path d="M1476 1213q2-5 6-3q5 2 3 6L1465 1252l-10 8l1-13z" />
          <path d="M1480 1200q2-2 4 1L1513 1252q3 7-1 9q-5 1-8-5z" />
          <path d="M1472 1219l9 5M1457 1246l7 5M1497 1240l7-4M1501 1247l7-4" />
        </g>
      </Slot>
    </div>
  );
}

function Desktop() {
  return (
    <>
      <div className="flex h-[1084px]">
        <div className="w-[268px] bg-[repeating-linear-gradient(90deg,#111_0_14px,#e4e4e4_14px_34px,#111_34px_46px,#e4e4e4_46px_60px,#111_60px_68px)]" />
        <div className="w-[430px] bg-[repeating-linear-gradient(90deg,#e4e4e4_0_22px,#111_22px_38px,#e4e4e4_38px_49px,#111_49px_60px)]" />
        <div className="flex-1 bg-[#1b1b1b]" />
      </div>
      <div className="flex h-[56px] text-black">
        <div className="w-[705px] bg-[linear-gradient(90deg,rgba(255,255,255,0)_20%,rgba(255,255,255,.22)_68%,rgba(255,255,255,.2)),repeating-linear-gradient(179.700deg,rgba(255,255,255,.03)_0_2px,rgba(0,0,0,.03)_2px_5px),linear-gradient(180deg,#525252,#6e6e6e)]">
          <div className="flex h-[40px] w-[177px] rounded-br-lg border-r border-b border-[#858585] bg-white/10">
            <span className="-ml-1 w-[153px] border-r-2 border-[#555] text-[23px] leading-[20px]">ip</span>
            <svg width="12" height="8" viewBox="0 0 12 8" className="mt-[3px] ml-[8px]"><path d="M1 1h10L6 7z" fill="#000" /></svg>
          </div>
        </div>
        <div className="flex flex-1 justify-end bg-[#1c1c1c] text-[22px] font-bold text-[#080808]">
          <div className="flex h-[40px] w-[129px] items-start gap-[13px] overflow-hidden bg-[#232323] pl-[30px] leading-[20px] whitespace-nowrap blur-[1px]">
            <svg width="20" height="20" viewBox="0 0 20 20" className="shrink-0"><path d="M6 1h8v8h5l-9 10L1 9h5z" fill="#0a0a0a" /></svg>
            Show A
          </div>
        </div>
      </div>
      <div className="flex h-[74px]">
        <div className="w-[705px] bg-linear-to-b from-[#242c34] from-0% via-[#4c5f71] via-45% to-[#5d7183]" />
        <div className="flex-1 bg-linear-to-b from-[#0d1013] to-[#22282f]" />
      </div>
      <div className="h-[92px] border-t border-t-[#6d7378] bg-linear-to-b from-[#8d9093] via-[#bfc1c4] via-55% to-[#f0f3f7]" />
    </>
  );
}

function Light({ c }: { c: string }) {
  return <span className={`h-[24px] w-[24px] rounded-full border ${c} shadow-[inset_0_3px_4px_rgba(0,0,0,.35),inset_0_-4px_6px_rgba(255,255,255,.6),0_1px_0_rgba(255,255,255,.6)]`} />;
}

export default function App() {
  return (
    <div className="relative h-[1306px] w-[1556px] overflow-hidden bg-[#8b8b8b] font-['Noto_Sans',sans-serif] text-[26px] leading-[36px] text-black">
      <Desktop />
      <div className="absolute top-[2px] left-[2px] h-[1082px] w-[1560px] overflow-hidden rounded-l-[8px] bg-[#ececec] shadow-[0_0_0_1px_rgba(70,70,70,.5)] [-webkit-text-stroke:0.4px]">
        <div className="h-[156px] border-t border-b-2 border-t-[#f6f6f6] border-b-[#6a6a6a] bg-linear-to-b from-[#e9e9e9] to-[#b1b1b1]">
          <div className="flex h-[44px] pt-[9px] pl-[16px]">
            <div className="flex w-[104px] justify-between">
              <Light c="border-[#8f2420] bg-[#f24a44]" />
              <Light c="border-[#96661c] bg-[#f5b23c]" />
              <Light c="border-[#7a7a7a] bg-[#c4c4c4]" />
            </div>
            <div className="mt-[-6px] ml-[730px] text-[26px] leading-[36px] text-[#333]"><Fit w={147}>Preferences</Fit></div>
          </div>
          <Toolbar />
        </div>
        <div className="flex h-[926px]">
          <LeftPane />
          <div className="mt-[20px] h-[866px] w-[2px] shrink-0 bg-[#8c8c8c]" />
          <RightPane />
        </div>
      </div>
      <Dock />
      <svg width="124" height="166" viewBox="70 806 124 166" className="absolute top-[806px] left-[70px] drop-shadow-[0_2px_2px_rgba(0,0,0,.35)]">
        <path d="M131.500 812L166 836V866.500A55.500 55.500 0 1 1 97 866.500V836zM97.500 909a34 34 0 1 0 68 0a34 34 0 1 0-68 0z" fill="#fff" fillRule="evenodd" />
        <path d="M131.500 816L162 838V867A52 52 0 1 1 101 867V838zM93.500 909a38 38 0 1 0 76 0a38 38 0 1 0-76 0z" fill="#00c53e" fillRule="evenodd" />
        <circle cx="131.500" cy="909" r="34" fill="#fff" fillOpacity=".92" stroke="#c9c9c9" strokeWidth="1.200" />
        <path d="M112 911.500L124.500 925L150 897" fill="none" stroke="#00c53e" strokeWidth="8.500" strokeLinecap="round" strokeLinejoin="round" />
      </svg>
      <DockMenu />
      <SubMenu />
    </div>
  );
}
